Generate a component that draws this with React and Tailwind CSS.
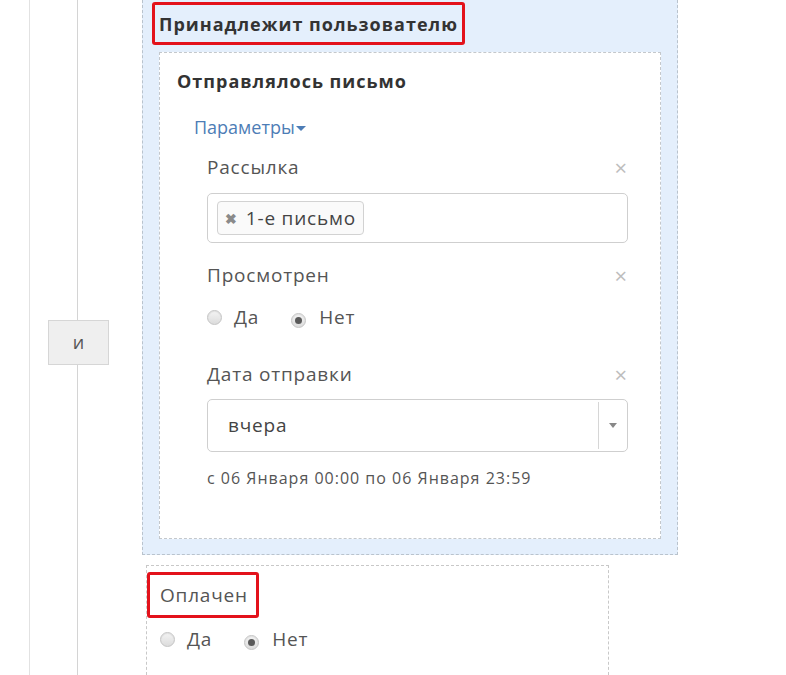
import React from "react";

function Radio({ checked }) {
  return (
    <span className="relative inline-flex h-[15px] w-[15px] shrink-0 items-center justify-center rounded-full border border-[#c4c4c4] bg-gradient-to-b from-[#f4f4f4] to-[#dcdcdc] shadow-[inset_0_1px_1px_rgba(0,0,0,0.08)]">
      {checked && <span className="h-[7px] w-[7px] rounded-full bg-[#5a5a5a]" />}
    </span>
  );
}

function RadioRow({ className = "" }) {
  return (
    <div className={"flex items-center text-[19px] leading-[24px] tracking-[0.8px] text-[#555] " + className}>
      <Radio />
      <span className="ml-[12px]">Да</span>
      <span className="ml-[32px]">
        <Radio checked />
      </span>
      <span className="ml-[13px]">Нет</span>
    </div>
  );
}

function Close() {
  return <span className="text-[22px] leading-none text-[#bdbdbd]">×</span>;
}

export default function App() {
  return (
    <div
      className="flex h-[675px] w-[786px] overflow-hidden bg-white"
      style={{ fontFamily: "'Open Sans', Arial, sans-serif" }}
    >
      <div className="w-[30px] shrink-0 border-r border-[#e2e2e2]" />
      <div className="flex w-[112px] shrink-0 flex-col">
        <div className="ml-[47px] h-[320px] w-px bg-[#d4d4d4]" />
        <div className="ml-[18px] flex h-[45px] w-[61px] items-center justify-center border border-[#d6d6d6] bg-[#efefef] text-[18px] text-[#555]">
          и
        </div>
        <div className="ml-[47px] w-px flex-1 bg-[#d4d4d4]" />
      </div>
      <div className="flex w-[536px] shrink-0 flex-col">
        <div className="flex h-[555px] flex-col border-x border-b border-dashed border-[#b9c3cd] bg-[#e4effc]">
          <div className="ml-[9px] mt-[2px] flex h-[43px] w-[313px] items-center rounded-[3px] border-[3px] border-[#e3121b] pl-[4px] text-[18px] font-bold leading-[24px] tracking-[1px] text-[#333]">
            Принадлежит пользователю
          </div>
          <div className="mx-[16px] mt-[7px] flex h-[487px] flex-col border border-dashed border-[#c4c8cc] bg-white pl-[17px] pr-[32px]">
            <div className="mt-[16px] text-[18px] font-bold leading-[24px] tracking-[1px] text-[#333]">
              Отправлялось письмо
            </div>
            <div className="ml-[17px] mt-[22px] flex items-center text-[18px] leading-[24px] text-[#4d7db6]">
              Параметры
              <span className="ml-[1px] mt-[2px] h-0 w-0 border-x-[5px] border-t-[5px] border-x-transparent border-t-[#4d7db6]" />
            </div>
            <div className="ml-[30px] flex flex-col">
              <div className="mt-[16px] flex items-center justify-between text-[19px] leading-[24px] tracking-[0.8px] text-[#555]">
                <span>Рассылка</span>
                <Close />
              </div>
              <div className="mt-[14px] flex h-[50px] items-center rounded-[5px] border border-[#cfcfcf] pl-[9px]">
                <div className="flex h-[34px] items-center rounded-[4px] border border-[#d2d2d2] bg-[#fafafa] pl-[7px] pr-[7px] text-[19px] tracking-[0.8px] text-[#444]">
                  <span className="text-[14px] font-bold text-[#8a8a8a]">✖</span>
                  <span className="ml-[8px]">1-е письмо</span>
                </div>
              </div>
              <div className="mt-[20px] flex items-center justify-between text-[19px] leading-[24px] tracking-[0.8px] text-[#555]">
                <span>Просмотрен</span>
                <Close />
              </div>
              <RadioRow className="mt-[18px]" />
              <div className="mt-[33px] flex items-center justify-between text-[19px] leading-[24px] tracking-[0.8px] text-[#555]">
                <span>Дата отправки</span>
                <Close />
              </div>
              <div className="mt-[13px] flex h-[53px] items-stretch rounded-[5px] border border-[#cfcfcf]">
                <div className="flex flex-1 items-center pl-[20px] text-[19px] tracking-[0.8px] text-[#444]">вчера</div>
                <div className="my-[2px] w-px bg-[#d6d6d6]" />
                <div className="flex w-[28px] items-center justify-center">
                  <span className="h-0 w-0 border-x-[4px] border-t-[5px] border-x-transparent border-t-[#888]" />
                </div>
              </div>
              <div className="mt-[15px] text-[16px] leading-[22px] tracking-[1px] text-[#555]">
                с 06 Января 00:00 по 06 Января 23:59
              </div>
            </div>
          </div>
        </div>
        <div className="ml-[4px] mt-[10px] flex w-[463px] flex-1 flex-col border-x border-t border-dashed border-[#c8c8c8]">
          <div className="mt-[6px] flex h-[46px] w-[112px] items-center rounded-[3px] border-[3px] border-[#e3121b] pl-[10px] text-[19px] tracking-[0.8px] text-[#555]">
            Оплачен
          </div>
          <RadioRow className="ml-[13px] mt-[9px]" />
        </div>
      </div>
    </div>
  );
}
